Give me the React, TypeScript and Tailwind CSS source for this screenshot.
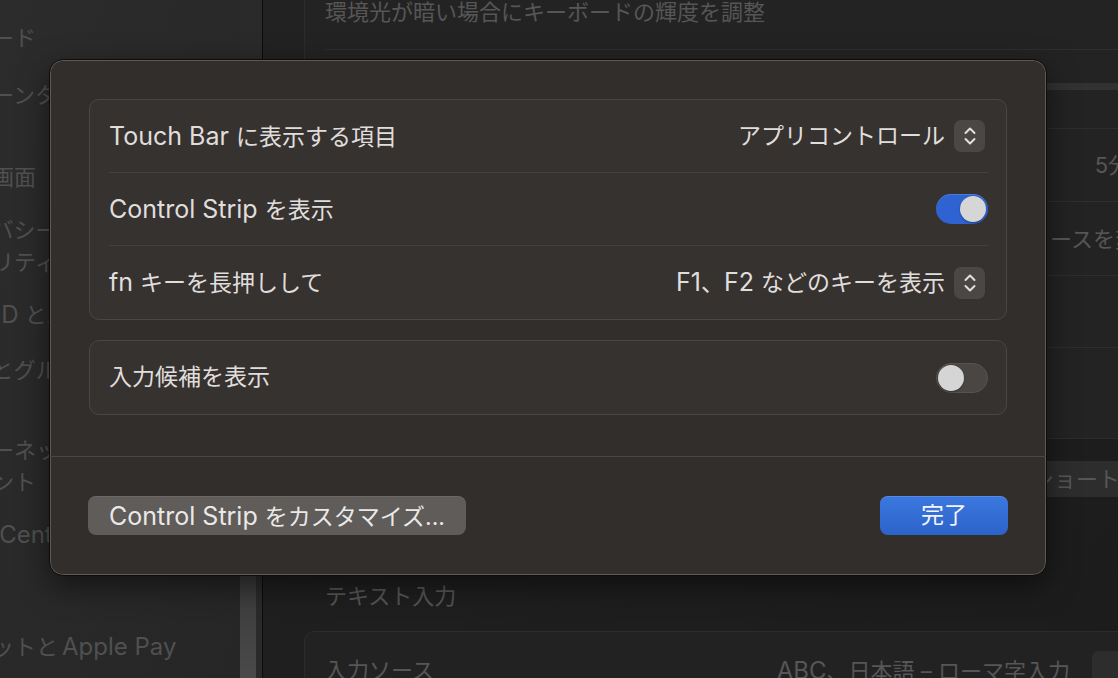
import React from "react";

const FONT = "font-['Inter','Noto_Sans_CJK_JP',sans-serif]";

function L({ children, gap = true }: { children: React.ReactNode; gap?: boolean }) {
  return <span className={`text-[25px] leading-none ${gap ? "mr-[7px]" : ""}`}>{children}</span>;
}

function Stepper() {
  return (
    <div className="w-[31px] h-[32px] rounded-[7px] bg-[#4b4745] flex items-center justify-center">
      <svg width="14" height="22" viewBox="0 0 14 22" fill="none">
        <path d="M2.5 8 L7 3.5 L11.5 8" stroke="#e2e0de" strokeWidth="2" strokeLinecap="round" strokeLinejoin="round" />
        <path d="M2.5 14 L7 18.5 L11.5 14" stroke="#e2e0de" strokeWidth="2" strokeLinecap="round" strokeLinejoin="round" />
      </svg>
    </div>
  );
}

function Toggle({ on }: { on: boolean }) {
  if (on) {
    return (
      <div className="w-[52px] h-[30px] rounded-full bg-[#2f63d2] shadow-[inset_0_1px_0_rgba(255,255,255,0.15)] flex items-center justify-end pr-[2px]">
        <div className="w-[26px] h-[26px] rounded-full bg-[#d6d6d6] shadow-[0_1px_2px_rgba(0,0,0,0.35)]" />
      </div>
    );
  }
  return (
    <div className="w-[52px] h-[30px] rounded-full bg-[#4a4644] border border-[#57534f] flex items-center justify-start pl-[1px]">
      <div className="w-[26px] h-[26px] rounded-full bg-[#d5d5d5] shadow-[0_1px_2px_rgba(0,0,0,0.35)]" />
    </div>
  );
}

function Row({ label, right, divider }: { label: React.ReactNode; right: React.ReactNode; divider?: boolean }) {
  return (
    <div className="pl-[19px] pr-[18px]">
      <div className={`h-[73px] flex items-center justify-between ${divider ? "border-b border-[#45413e]" : ""}`}>
        <span className="text-[23px] leading-none text-[#e0dedc] flex items-baseline">{label}</span>
        {right}
      </div>
    </div>
  );
}

const BG_TEXT = "text-[22px] leading-none text-[#565656]";

export default function App() {
  const sideItems: { t: React.ReactNode; mt: number; ml?: number }[] = [
    { t: "集中モード", mt: 26 },
    { t: "スクリーンタイム", mt: 33 },
    { t: "ロック画面", mt: 58 },
    { t: "プライバシーと", mt: 29 },
    { t: "セキュリティ", mt: 8 },
    { t: <><span className="text-[24px] mr-[6px]">Touch ID</span>とパスワード</>, mt: 29, ml: -8 },
    { t: "ユーザとグループ", mt: 31 },
    { t: "インターネット", mt: 56 },
    { t: "アカウント", mt: 8 },
    { t: <span className="text-[24px]">Game Center</span>, mt: 29 },
    { t: <>ウォレットと<span className="text-[24px] ml-[4px]">Apple Pay</span></>, mt: 88 },
  ];
  return (
    <div className={`relative w-[1118px] h-[678px] overflow-hidden flex bg-[#1e1e1e] ${FONT}`}>
      {/* Sidebar */}
      <aside className="w-[240px] shrink-0 h-full bg-gradient-to-br from-[#2c2c2d] to-[#262626] overflow-hidden">
        <div className="flex flex-col ml-[-74px]">
          {sideItems.map((s, i) => (
            <div key={i} style={{ marginTop: s.mt, marginLeft: s.ml ?? 0 }} className="h-[24px] flex items-center whitespace-nowrap text-[22px] leading-none text-[#505050]">
              {s.t}
            </div>
          ))}
        </div>
      </aside>
      {/* Scrollbar */}
      <div className="w-[22px] shrink-0 h-full bg-[#2a2a2a] flex">
        <div className="w-[16px] h-full flex flex-col">
          <div className="h-[575px]" />
          <div className="flex-1 bg-gradient-to-b from-[#3a3a3a] to-[#4a4a4a]" />
        </div>
      </div>
      <div className="w-[1px] shrink-0 h-full bg-[#0c0c0c]" />
      {/* Main */}
      <main className="flex-1 h-full bg-gradient-to-br from-[#232222] to-[#1c1c1c] overflow-hidden pl-[41px]">
        <div className="w-[919px] flex flex-col">
          <div className="mt-[-40px] rounded-[10px] border border-[#2c2c2c] bg-[#242323]">
            <div className="px-[20px]">
              <div className={`h-[89px] flex items-end pb-[26px] border-b border-[#2e2e2e] ${BG_TEXT}`}>
                環境光が暗い場合にキーボードの輝度を調整
              </div>
              <div className="h-[79px] flex items-center justify-between border-b border-[#2e2e2e]">
                <span className={BG_TEXT}>キーボードの輝度</span>
                <div className="w-[560px] h-[7px] rounded-full bg-[#333232] mb-[6px]" />
              </div>
              <div className={`h-[73px] flex items-center justify-between border-b border-[#2e2e2e] ${BG_TEXT}`}>
                <span>キーボードのバックライトをオフ</span>
                <span className="flex items-center gap-[9px] mr-[3px]">5分後<span className="w-[38px] h-[32px]" /></span>
              </div>
              <div className={`h-[74px] flex items-center justify-between border-b border-[#2e2e2e] ${BG_TEXT}`}>
                <span>地球儀キーを押して</span>
                <span className="flex items-center gap-[9px] mr-[3px]">入力ソースを変更<span className="w-[31px] h-[32px]" /></span>
              </div>
              <div className="h-[72px] border-b border-[#2e2e2e]" />
              <div className="h-[90px]" />
            </div>
          </div>
          <div className="mt-[22px] flex justify-end">
            <div className={`h-[36px] px-[16px] mr-[2px] rounded-[7px] bg-[#2d2d2d] flex items-center ${BG_TEXT}`}>
              キーボードショートカット...
            </div>
          </div>
          <div className={`mt-[88px] pl-[21px] ${BG_TEXT}`}>テキスト入力</div>
          <div className="mt-[24px] rounded-[10px] border border-[#2c2c2c] bg-[#232222]">
            <div className="px-[20px] h-[80px] flex items-start justify-between pt-[27px]">
              <span className={BG_TEXT}>入力ソース</span>
              <span className={`${BG_TEXT} flex items-start gap-[22px]`}>
                <span>
                  <span className="text-[24px]">ABC</span>、日本語 – ローマ字入力
                </span>
                <span className="w-[110px] h-[34px] mt-[-8px] rounded-[6px] bg-[#2d2d2d]" />
              </span>
            </div>
          </div>
        </div>
      </main>

      {/* Dialog overlay */}
      <div className="absolute left-[49px] top-[59px] w-[998px] h-[517px] rounded-[14px] bg-[#312e2c] border border-[#0d0d0d] shadow-[inset_0_0_0_1px_#5c5956,0_10px_30px_rgba(0,0,0,0.5)] flex flex-col">
        <div className="px-[39px] pt-[39px] flex flex-col gap-[20px]">
          <div className="rounded-[10px] bg-[#363230] border border-[#4a4643]">
            <Row label={<><L>Touch Bar</L>に表示する項目</>} divider right={
              <div className="flex items-center gap-[9px] mr-[3px]">
                <span className="text-[23px] leading-none text-[#e0dedc]">アプリコントロール</span>
                <Stepper />
              </div>
            } />
            <Row label={<><L>Control Strip</L>を表示</>} divider right={<Toggle on />} />
            <Row label={<><L>fn</L>キーを長押しして</>} right={
              <div className="flex items-center gap-[9px] mr-[3px]">
                <span className="text-[23px] leading-none text-[#e0dedc] flex items-baseline">
                  <L gap={false}>F1</L>、<L>F2</L>などのキーを表示
                </span>
                <Stepper />
              </div>
            } />
          </div>
          <div className="rounded-[10px] bg-[#363230] border border-[#4a4643]">
            <Row label="入力候補を表示" right={<Toggle on={false} />} />
          </div>
        </div>
        <div className="mt-[41px] h-[1px] bg-[#4a4644]" />
        <div className="flex-1 px-[38px] flex items-center justify-between pb-[2px]">
          <div className="h-[39px] w-[378px] rounded-[8px] bg-[#5f5c5a] shadow-[inset_0_1px_0_rgba(255,255,255,0.08)] flex items-baseline justify-center pt-[8px] text-[23px] leading-none text-[#ebe9e8]">
            <L>Control Strip</L>をカスタマイズ...
          </div>
          <div className="h-[39px] w-[128px] rounded-[8px] bg-gradient-to-b from-[#3b78df] to-[#2c63c9] shadow-[inset_0_1px_0_rgba(255,255,255,0.15)] flex items-center justify-center text-[23px] leading-none text-[#f3f5fa]">
            完了
          </div>
        </div>
      </div>
    </div>
  );
}
